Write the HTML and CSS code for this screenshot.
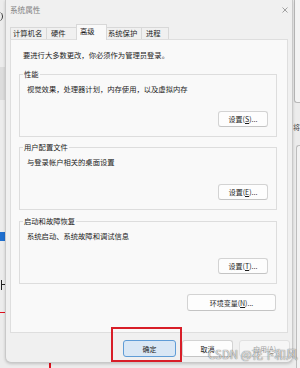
FILE: index.html
```html
<!DOCTYPE html>
<html lang="zh-CN">
<head>
<meta charset="utf-8">
<title>系统属性</title>
<link rel="stylesheet" href="styles.css">
</head>
<body>
<div class="deco deco-paren"></div>
<div class="deco deco-box"></div>
<div class="deco deco-blue"></div>
<div class="deco deco-glyph-v"></div>
<div class="deco deco-glyph-h"></div>
<div class="deco deco-red-h"></div>
<div class="deco deco-red-v"></div>
<div class="deco deco-right-top"></div>
<div class="deco deco-right-char">将</div>
<div class="deco deco-right-bottom"></div>

<div class="dialog">
  <div class="titlebar">
    <span class="title">系统属性</span>
    <svg class="close" width="6" height="6" viewBox="0 0 6 6"><path d="M0.5 0.5L5.5 5.5M5.5 0.5L0.5 5.5" stroke="#8c8c8c" stroke-width="0.8" fill="none"/></svg>
  </div>
  <div class="tabs">
    <div class="tab t1">计算机名</div>
    <div class="tab t2">硬件</div>
    <div class="tab t3 sel">高级</div>
    <div class="tab t4">系统保护</div>
    <div class="tab t5">进程</div>
  </div>
  <div class="panel">
    <p class="note">要进行大多数更改，你必须作为管理员登录。</p>
    <div class="group g1">
      <span class="label">性能</span>
      <p>视觉效果，处理器计划，内存使用，以及虚拟内存</p>
      <div class="row"><button class="btn">设置(<u>S</u>)...</button></div>
    </div>
    <div class="group g2">
      <span class="label">用户配置文件</span>
      <p>与登录帐户相关的桌面设置</p>
      <div class="row"><button class="btn">设置(<u>E</u>)...</button></div>
    </div>
    <div class="group g3">
      <span class="label">启动和故障恢复</span>
      <p>系统启动、系统故障和调试信息</p>
      <div class="row"><button class="btn">设置(<u>T</u>)...</button></div>
    </div>
    <div class="row env"><button class="btn wide">环境变量(<u>N</u>)...</button></div>
  </div>
  <div class="footer">
    <button class="btn foot primary">确定</button>
    <button class="btn foot">取消</button>
    <button class="btn foot" disabled>应用(<u>A</u>)</button>
  </div>
</div>

<div class="redbox"></div>
<div class="watermark">CSDN @花下和风</div>
</body>
</html>
```

FILE: styles.css
```css
* { box-sizing: border-box; }
html, body { margin: 0; padding: 0; }
body {
  width: 300px;
  height: 368px;
  overflow: hidden;
  position: relative;
  background: #ececec;
  font-family: "Noto Sans CJK SC", "Noto Sans", sans-serif;
  font-size: 7.3px;
  color: #1c1c1c;
}

/* background desktop fragments */
.deco { position: absolute; }
.deco-paren { left: -3px; top: 12px; width: 6px; height: 9px; border-right: 1px solid #333; border-radius: 0 5px 5px 0; }
.deco-box { left: 0; top: 67px; width: 5px; height: 33px; background: #dcdcdc; }
.deco-blue { left: 0; top: 232px; width: 5px; height: 9px; background: #1f6fcf; }
.deco-glyph-v { left: 1px; top: 280px; width: 1px; height: 10px; background: #222; }
.deco-glyph-h { left: 2px; top: 284px; width: 3px; height: 1px; background: #222; }
.deco-red-h { left: 0; top: 312px; width: 5px; height: 1px; background: #e0101e; }
.deco-red-v { left: 49px; top: 362px; width: 2px; height: 6px; background: #e0101e; }
.deco-right-top { left: 294px; top: 0; width: 6px; height: 103px; border-left: 1px solid #b9b9b9; border-bottom: 1px solid #b9b9b9; border-bottom-left-radius: 3px; background: #f4f4f4; }
.deco-right-char { left: 293px; top: 122px; font-size: 7px; line-height: 10px; color: #444; }
.deco-right-bottom { left: 296px; top: 145px; width: 4px; height: 223px; border-left: 1px solid #bdbdbd; border-top: 1px solid #bdbdbd; border-top-left-radius: 3px; background: #f2f2f2; }

.dialog {
  position: relative;
  margin-left: 5px;
  width: 288px;
  height: 363px;
  background: #f0f0f0;
  border: 1px solid #c9c9c9;
  border-top: 0;
  border-radius: 0 0 6px 6px;
  box-shadow: 0 1px 3px rgba(0, 0, 0, 0.18);
  display: flex;
  flex-direction: column;
}

.titlebar {
  height: 20px;
  display: flex;
  align-items: center;
  justify-content: space-between;
  padding: 0 4px 0 4px;
}
.title { font-size: 7.6px; line-height: 10px; color: #808080; }
.close { display: block; margin-top: -1px; }

.tabs {
  height: 19px;
  display: flex;
  align-items: flex-end;
  padding-left: 4px;
  position: relative;
  z-index: 1;
}
.tab {
  height: 12px;
  border: 1px solid #d8d8d8;
  border-bottom: 0;
  margin-right: -1px;
  line-height: 10px;
  white-space: nowrap;
  background: #f0f0f0;
  color: #1c1c1c;
}
.t1 { width: 37px; padding-left: 2px; }
.t2 { width: 31px; padding-left: 4px; }
.t3 { width: 31px; padding-left: 3px; }
.t4 { width: 36px; padding-left: 1px; }
.t5 { width: 28px; padding-left: 4px; }
.tab.sel {
  height: 16px;
  margin-bottom: -1px;
  background: #f9f9f9;
  line-height: 13px;
}

.panel {
  margin: 0 4px;
  height: 294px;
  background: #f9f9f9;
  border: 1px solid #dedede;
  padding: 10px 10px 0 8px;
  display: flex;
  flex-direction: column;
}
.note { margin: 0 0 0 4px; line-height: 10px; }

.group {
  position: relative;
  height: 63px;
  border: 1px solid #dddddd;
  padding: 9px 8px 0 7px;
}
.g1 { margin-top: 14px; }
.g2 { margin-top: 10px; }
.g3 { margin-top: 11px; }
.group .label {
  position: absolute;
  top: -6px;
  left: 3px;
  padding: 0 1px;
  background: #f9f9f9;
  line-height: 10px;
}
.group p { margin: 0; line-height: 10px; }
.row { display: flex; justify-content: flex-end; }
.group .row { margin-top: 17px; }
.env { margin-top: 10px; padding-right: 1px; }

.btn {
  font-family: inherit;
  font-size: 7px;
  color: #1c1c1c;
  width: 50px;
  height: 16px;
  padding: 0;
  line-height: 14px;
  background: #fdfdfd;
  border: 1px solid #d3d3d3;
  border-bottom-color: #c4c4c4;
  border-radius: 3px;
  white-space: nowrap;
}
.btn.wide { width: 89px; height: 17px; }
.btn u { text-underline-offset: 1px; }

.footer {
  display: flex;
  justify-content: flex-end;
  gap: 6px;
  padding: 7px 2px 0 0;
}
.btn.foot { width: 51px; height: 17px; }
.btn.primary { width: 53px; background: #d9e7f5; border-color: #5f9cd6; }
.btn[disabled] { background: #f6f6f6; border-color: #e1e1e1; color: #a3a3a3; }

.redbox {
  position: absolute;
  left: 111px;
  top: 327px;
  width: 71px;
  height: 35px;
  border: 2px solid #d81e28;
}

.watermark {
  position: absolute;
  left: 208px;
  top: 346px;
  font-family: "Noto Sans CJK SC", "Noto Sans", sans-serif;
  font-size: 11.5px;
  line-height: 16px;
  color: rgba(255, 255, 255, 0.75);
  text-shadow: 0 0 1px rgba(0, 0, 0, 0.55), 0 0 1px rgba(0, 0, 0, 0.35);
  white-space: nowrap;
}
```
